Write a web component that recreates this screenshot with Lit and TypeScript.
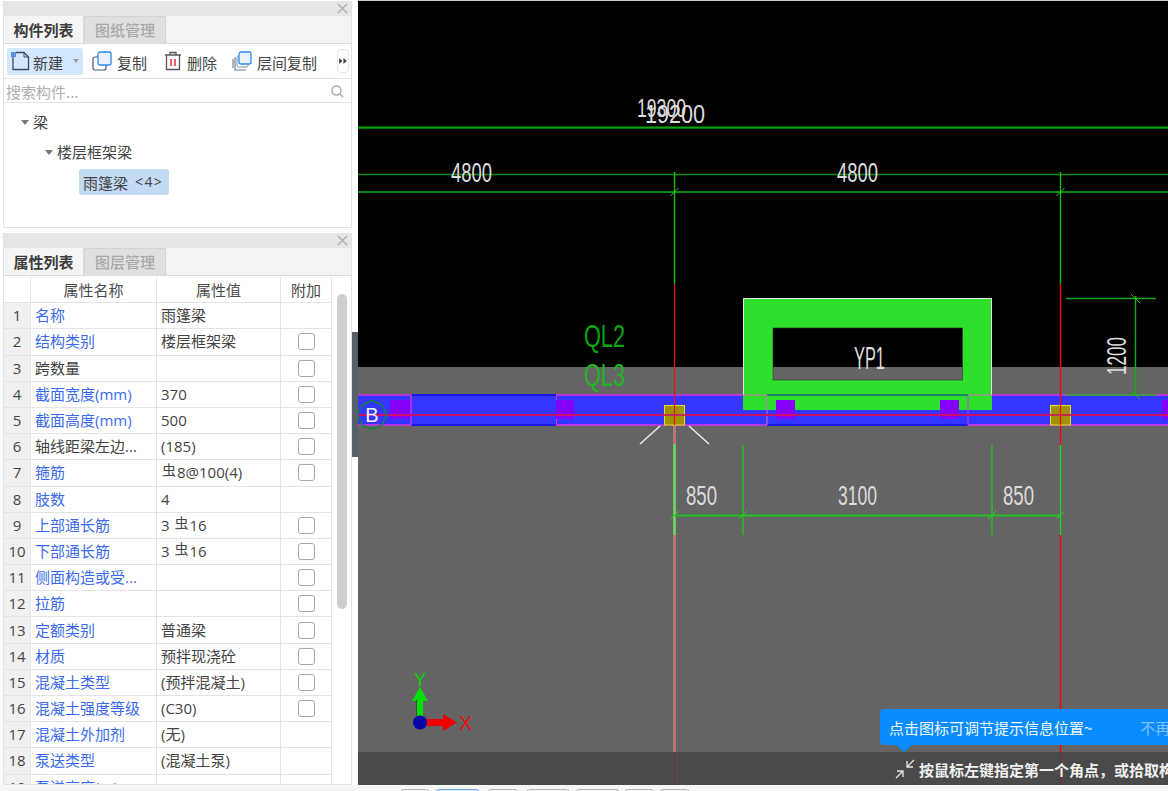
import { LitElement, html, css, svg } from "lit";
import { customElement } from "lit/decorators.js";

interface Row { name: string; val: unknown; blue: boolean; check: boolean; }
const bar = html`<span class="steel">虫</span>`;
const rows: Row[] = [
  { name: "名称", val: "雨篷梁", blue: true, check: false },
  { name: "结构类别", val: "楼层框架梁", blue: true, check: true },
  { name: "跨数量", val: "", blue: false, check: true },
  { name: "截面宽度(mm)", val: "370", blue: true, check: true },
  { name: "截面高度(mm)", val: "500", blue: true, check: true },
  { name: "轴线距梁左边...", val: "(185)", blue: false, check: true },
  { name: "箍筋", val: html`${bar}8@100(4)`, blue: true, check: true },
  { name: "肢数", val: "4", blue: true, check: false },
  { name: "上部通长筋", val: html`3 ${bar}16`, blue: true, check: true },
  { name: "下部通长筋", val: html`3 ${bar}16`, blue: true, check: true },
  { name: "侧面构造或受...", val: "", blue: true, check: true },
  { name: "拉筋", val: "", blue: true, check: true },
  { name: "定额类别", val: "普通梁", blue: true, check: true },
  { name: "材质", val: "预拌现浇砼", blue: true, check: true },
  { name: "混凝土类型", val: "(预拌混凝土)", blue: true, check: true },
  { name: "混凝土强度等级", val: "(C30)", blue: true, check: true },
  { name: "混凝土外加剂", val: "(无)", blue: true, check: false },
  { name: "泵送类型", val: "(混凝土泵)", blue: true, check: false },
  { name: "泵送高度(m)", val: "", blue: true, check: false },
];

/* CAD annotation: x = left, y = baseline, w = run width, h = digit height */
const cad = (x: number, y: number, w: number, h: number, t: string, fill = "#dcdcdc") =>
  svg`<text class="cad" x=${x} y=${y} font-size=${h / 0.71} textLength=${w} lengthAdjust="spacingAndGlyphs" fill=${fill}>${t}</text>`;

const tick = (x: number, y: number) =>
  svg`<line x1=${x - 4} y1=${y + 4} x2=${x + 4} y2=${y - 4} stroke="#2fd02f"/>`;

@customElement("app-root")
export class AppRoot extends LitElement {
  static styles = css`
    :host { display: block; width: 1168px; height: 791px; overflow: hidden; background: #f6f6f6;
      font-family: "Noto Sans CJK SC", "Noto Sans", sans-serif; color: #444; font-size: 15px; }
    .main { display: flex; height: 785px; background: #c8c8c8; }
    .left { position: relative; width: 358px; flex: none; padding: 1px 0 0 3px; box-sizing: border-box; background: #fff;
      display: flex; flex-direction: column; gap: 5px; }
    .handle { position: absolute; left: 352px; top: 332px; width: 6px; height: 125px; background: #56606a; }
    .panel { width: 349px; box-sizing: border-box; border: 1px solid #e2e2e2; border-top: 0; background: #fff;
      display: flex; flex-direction: column; overflow: hidden; }
    .p1 { height: 227px; flex: none; }
    .p2 { flex: 1; min-height: 0; }
    .title { height: 15px; flex: none; background: #e6e6e6; display: flex; justify-content: flex-end; align-items: center; padding-right: 3px; }
    .title svg { display: block; }
    .tabs { height: 28px; flex: none; display: flex; background: #f3f3f3; border-bottom: 1px solid #dcdcdc; box-sizing: border-box; }
    .tab { width: 80px; box-sizing: border-box; display: flex; align-items: center; justify-content: center; line-height: 1; padding-bottom: 1px; }
    .tab.on { font-weight: 700; color: #3c3c3c; background: #f5f5f5; border-right: 1px solid #ddd; }
    .tab.off { width: 82px; color: #a8a8a8; background: #e0e0e0; border: 1px solid #d4d4d4; border-bottom: 0; font-weight: 500; }
    .tools { height: 35px; flex: none; display: flex; align-items: center; padding: 0 2px 0 3px; border-bottom: 1px solid #e4e4e4; box-sizing: border-box; }
    .tool { display: flex; align-items: center; gap: 5px; line-height: 1; white-space: nowrap; }
    .tool svg { display: block; flex: none; }
    .tool span:not(.caret) { padding-top: 2px; }
    .new { width: 76px; height: 27px; background: #d3e8ff; border-radius: 3px; padding-left: 3px; box-sizing: border-box; margin-right: 9px; gap: 3px; }
    .caret { width: 0; height: 0; border: 3.5px solid transparent; border-top: 4px solid #9a9a9a; border-bottom: 0; margin-left: 7px; }
    .t2 { margin-right: 17px; }
    .t3 { margin-right: 15px; }
    .more { margin-left: auto; width: 12px; height: 24px; border: 1px solid #e4e4e4; border-radius: 4px; box-sizing: border-box;
      display: flex; align-items: center; justify-content: center; }
    .search { height: 24px; flex: none; display: flex; align-items: center; justify-content: space-between; padding: 2px 7px 0 2px; color: #aeaeae; border-bottom: 1px solid #e4e4e4; box-sizing: border-box; line-height: 1; }
    .tree { flex: 1; padding: 5px 0 0 0; }
    .node { display: flex; align-items: center; gap: 4px; height: 26px; line-height: 1; }
    .arrow { width: 0; height: 0; border: 4px solid transparent; border-top: 5px solid #777; border-bottom: 0; margin-top: 2px; }
    .n1 { padding-left: 17px; margin-bottom: 4px; }
    .n2 { padding-left: 41px; }
    .sel { margin: 5px 0 0 75px; width: 90px; height: 26px; background: #c2daf3; border-radius: 3px; display: flex; align-items: center;
      padding-left: 4px; box-sizing: border-box; line-height: 1; gap: 7px; }
    .count { letter-spacing: 1.4px; font-size: 14px; font-family: "Open Sans", sans-serif; }
    .wrap { flex: 1; min-height: 0; position: relative; overflow: hidden; padding-top: 1px; }
    .grid { display: grid; grid-template-columns: 27px 126px 124px 51px; grid-auto-rows: 26.2px; width: 328px; }
    .c { border-right: 1px solid #e4e4e4; border-bottom: 1px solid #e4e4e4; box-sizing: border-box; display: flex; align-items: center;
      white-space: nowrap; overflow: hidden; line-height: 1; padding-left: 4px; }
    .hd { justify-content: center; padding-left: 0; font-size: 15px; color: #4a4a4a; }
    .i { background: #f0f0f0; justify-content: center; padding-left: 0; font-family: "Open Sans", sans-serif; font-size: 15px; }
    .blue { color: #3a6af0; }
    .num { font-family: "Open Sans", "Noto Sans CJK SC", sans-serif; }
    .v { white-space: pre; }
    .ck { justify-content: center; padding-left: 0; }
    .box { width: 17px; height: 17px; box-sizing: border-box; border: 1px solid #a8a8a8; border-radius: 3px; background: #fff; }
    .steel { font-size: 14px; position: relative; top: -3px; margin: 0 1px; font-family: "Noto Sans CJK SC", sans-serif; }
    .thumb { position: absolute; left: 333px; top: 18px; width: 10px; height: 315px; border-radius: 5px; background: #cfcfcf; }
    .canvas { position: relative; flex: 1; overflow: hidden; background: #000; margin-top: 1px; }
    .canvas > svg { position: absolute; left: 0; top: 0; display: block; }
    .cad { font-family: "Liberation Sans", sans-serif; font-weight: 400; }
    .tip { position: absolute; left: 522px; top: 708px; width: 300px; height: 36px; background: #0a8cff; border-radius: 4px; color: #f2f8ff;
      font-size: 15px; display: flex; align-items: center; padding-left: 9px; box-sizing: border-box; white-space: nowrap; line-height: 1; }
    .tip::after { content: ""; position: absolute; left: 16px; top: 36px; border: 8px solid transparent; border-top: 7px solid #0a8cff; border-bottom: 0; }
    .later { margin-left: 48px; color: #7fc0ff; }
    .prompt { position: absolute; left: 537px; top: 758px; display: flex; align-items: center; gap: 4px; color: #f0f0f0; font-weight: 700; font-size: 15px;
      white-space: nowrap; line-height: 1; height: 20px; }
    .prompt svg { display: block; flex: none; }
    .foot { height: 6px; display: flex; background: #f6f6f6; overflow: hidden; }
    .pill { height: 10px; margin-top: 4px; box-sizing: border-box; border: 1px solid #b4b4b4; border-radius: 4px; background: #f6f6f6; flex: none; }
    .pill.cur { border-color: #6aa8ee; background: #d3e8ff; }
  `;

  private x() {
    return html`<svg width="11" height="11" viewBox="0 0 11 11" fill="none" stroke="#a9a9a9" stroke-width="1.2"><path d="M1 1l9 9M10 1l-9 9"/></svg>`;
  }

  private drawing() {
    return svg`
    <svg width="810" height="784" viewBox="358 1 810 784" xmlns="http://www.w3.org/2000/svg" fill="none">
      <rect x="358" y="1" width="810" height="366" fill="#000"/>
      <rect x="358" y="367" width="810" height="385" fill="#646464"/>
      <rect x="358" y="752" width="810" height="33" fill="#4a4a4a"/>

      <!-- top dimension lines -->
      <line x1="358" x2="1168" y1="127.7" y2="127.7" stroke="#0aa50a" stroke-width="2.2"/>
      <line x1="358" x2="1168" y1="174.5" y2="174.5" stroke="#0a8c0a" stroke-width="1.4"/>
      <line x1="358" x2="1168" y1="192" y2="192" stroke="#0ab80a" stroke-width="1.6"/>
      <line x1="674.5" x2="674.5" y1="172" y2="284" stroke="#0ac00a" stroke-width="1.4"/>
      <line x1="1060.5" x2="1060.5" y1="172" y2="284" stroke="#0ac00a" stroke-width="1.4"/>
      ${tick(674.5, 192)} ${tick(1060.5, 192)}
      ${cad(637, 117, 49, 18, "19300")}
      ${cad(645, 123, 60, 18, "19200")}
      ${cad(451, 182, 41, 19, "4800")}
      ${cad(837, 182, 41, 19, "4800")}
      ${cad(584, 347, 41, 22, "QL2", "#0fa50f")}
      ${cad(584, 386, 41, 22, "QL3", "#22b422")}

      <!-- canopy -->
      <path d="M743 410V298H992V410H743ZM773 328V380H962.500V328H773Z" fill="#2ce02c" fill-rule="evenodd"/>
      <path d="M743.500 395V298.500H991.500V395" stroke="#e6e6e6"/>
      <rect x="773" y="328" width="189.500" height="52" stroke="#333" stroke-width="0.6"/>
      ${cad(854, 369, 31, 22, "YP1")}

      <!-- beam -->
      <rect x="358" y="395" width="385" height="30" fill="#3535ff"/>
      <rect x="992" y="395" width="176" height="30" fill="#3535ff"/>
      <rect x="743" y="410" width="249" height="15" fill="#3535ff"/>
      <line x1="411" x2="556" y1="395" y2="395" stroke="#1a1ae0" stroke-width="2"/>
      <line x1="411" x2="556" y1="425" y2="425" stroke="#1a1ae0" stroke-width="2"/>
      <line x1="767" x2="968" y1="395" y2="395" stroke="#16607a" stroke-width="1.5"/>
      <line x1="767" x2="968" y1="425" y2="425" stroke="#1a1ae0" stroke-width="2"/>
      <path d="M358 395H411V425H358" stroke="#d830e8" stroke-width="1.4"/>
      <path d="M556 395H743" stroke="#d830e8" stroke-width="1.4"/>
      <path d="M743 395H767" stroke="#c080a0" stroke-width="1.2"/>
      <path d="M968 395H992" stroke="#c080a0" stroke-width="1.2"/>
      <path d="M556 425H767" stroke="#e030f0" stroke-width="1.4"/>
      <line x1="556.500" x2="556.500" y1="395" y2="425" stroke="#e030f0"/>
      <line x1="767" x2="767" y1="395" y2="425" stroke="#d070c0"/>
      <line x1="968" x2="968" y1="395" y2="425" stroke="#e030f0"/>
      <path d="M968 425H1168" stroke="#e030f0" stroke-width="1.4"/>
      <path d="M992 395H1168" stroke="#d830e8" stroke-width="1.4"/>

      <rect x="390" y="400" width="20" height="19" fill="#8400f8"/>
      <rect x="556" y="400" width="18" height="19" fill="#8400f8"/>
      <rect x="776" y="400" width="19" height="19" fill="#8400f8"/>
      <rect x="940" y="400" width="19" height="19" fill="#8400f8"/>
      <rect x="1162" y="400" width="6" height="19" fill="#8400f8"/>

      <line x1="358" x2="1168" y1="415" y2="415" stroke="#c8106c" stroke-width="2"/>

      <!-- axis B bubble -->
      <path d="M372 400.500L382 405L386.500 415L382 425L372 429.500L362 425L357.500 415L362 405Z" stroke="#0a8a3a" stroke-width="1.4"/>
      <text x="372" y="422" text-anchor="middle" font-size="20" fill="#f0f0ff" class="cad">B</text>

      <!-- grid lines -->
      <line x1="674.500" x2="674.500" y1="284" y2="444" stroke="#f01010" stroke-width="1.2"/>
      <line x1="1060.500" x2="1060.500" y1="284" y2="445" stroke="#f00" stroke-width="1.4"/>
      <line x1="674.500" x2="674.500" y1="425" y2="752" stroke="#8a8a8a" stroke-width="3"/>
      <line x1="674.500" x2="674.500" y1="425" y2="752" stroke="#ff5a5a" stroke-width="1.4"/>
      <line x1="674.500" x2="674.500" y1="752" y2="785" stroke="#6a3434"/>
      <line x1="674.500" x2="674.500" y1="444" y2="535" stroke="#55f055" stroke-width="2"/>
      <line x1="1060.500" x2="1060.500" y1="445" y2="535" stroke="#10e010" stroke-width="1.2"/>
      <line x1="1060.500" x2="1060.500" y1="535" y2="752" stroke="#f00" stroke-width="1.4"/>
      <line x1="1060.500" x2="1060.500" y1="752" y2="785" stroke="#7a2a2a"/>

      <!-- yellow grips -->
      <rect x="664.500" y="405.500" width="20" height="19.500" fill="#a09200" stroke="#e8e020"/>
      <rect x="1050.500" y="405.500" width="20" height="19.500" fill="#a09200" stroke="#e8e020"/>
      <line x1="674.500" x2="674.500" y1="405" y2="425" stroke="#e81010" stroke-width="1.2"/>
      <line x1="1060.500" x2="1060.500" y1="405" y2="425" stroke="#f00" stroke-width="1.2"/>
      <line x1="664" x2="685" y1="415" y2="415" stroke="#c8106c" stroke-width="1.6"/>
      <line x1="1050" x2="1071" y1="415" y2="415" stroke="#c8106c" stroke-width="1.6"/>
      <path d="M660 426L640 444M689 426L709 444" stroke="#e8e8e8" stroke-width="1.6"/>

      <!-- lower dimensions -->
      <line x1="674" x2="1060" y1="515.500" y2="515.500" stroke="#22c022" stroke-width="1.8"/>
      <line x1="743" x2="743" y1="445" y2="535" stroke="#1cc81c" stroke-width="1.4"/>
      <line x1="992" x2="992" y1="445" y2="535" stroke="#1cc81c" stroke-width="1.4"/>
      ${tick(674.5, 515)} ${tick(743, 515)} ${tick(992, 515)} ${tick(1060.5, 515)}
      ${cad(686, 505, 31, 20, "850")}
      ${cad(838, 505, 39, 20, "3100")}
      ${cad(1003, 505, 31, 20, "850")}

      <!-- 1200 dimension -->
      <line x1="1066" x2="1156" y1="298.500" y2="298.500" stroke="#10a810" stroke-width="1.4"/>
      <line x1="1066" x2="1156" y1="395" y2="395" stroke="#18b818" stroke-width="1.4"/>
      <line x1="1135.500" x2="1135.500" y1="296" y2="396" stroke="#10b010" stroke-width="1.4"/>
      <path d="M1131 294L1140 303M1131 391L1140 399" stroke="#10c010"/>
      <g transform="translate(1126 375) rotate(-90)">${cad(0, 0, 38, 20, "1200")}</g>

      <!-- UCS -->
      <path d="M417 720V701H412L420 687L428 701H423V720Z" fill="#00e000"/>
      <line x1="416.500" x2="416.500" y1="700" y2="716" stroke="#444"/>
      <path d="M424 719H443V714L457 722.500L443 731V726H424Z" fill="#f00000"/>
      <circle cx="420" cy="722.500" r="7" fill="#0606a8"/>
      <text class="cad" x="414" y="686" font-size="18" fill="#00d800">Y</text>
      <text class="cad" x="459" y="730" font-size="20" fill="#e81010">X</text>
    </svg>`;
  }

  render() {
    const pills: [number, number, boolean][] = [
      [30, 400, false], [45, 5, true], [32, 7, false], [44, 7, false], [45, 5, false], [31, 4, false], [31, 4, false],
    ];
    return html`
      <div class="main">
        <div class="left">
          <section class="panel p1">
            <div class="title">${this.x()}</div>
            <div class="tabs"><div class="tab on">构件列表</div><div class="tab off">图纸管理</div></div>
            <div class="tools">
              <div class="tool new">
                <svg width="20" height="20" viewBox="0 0 20 20" fill="none"><path d="M3 5V18.500H18.500V6L14 1.500H6" stroke="#3b4a5c" stroke-width="1.3"/><path d="M14 1.500V6H18.500" stroke="#3b4a5c"/><rect x="1" y="1" width="5" height="5" fill="#5b8fe0"/></svg>
                <span>新建</span><span class="caret"></span>
              </div>
              <div class="tool t2">
                <svg width="20" height="20" viewBox="0 0 20 20" fill="none"><rect x="1" y="6" width="13" height="13" rx="2" stroke="#4a5a6a" stroke-width="1.2"/><rect x="6" y="1" width="13" height="13" rx="2" fill="#eaf3ff" stroke="#2d8cf0" stroke-width="1.3"/></svg>
                <span>复制</span>
              </div>
              <div class="tool t3">
                <svg width="18" height="20" viewBox="0 0 18 20" fill="none"><path d="M1 4H17M6 4V1.500H12V4M2.500 4V18.500H15.500V4" stroke="#555" stroke-width="1.3"/><path d="M7 8V15M11 8V15" stroke="#e02020" stroke-width="1.4"/></svg>
                <span>删除</span>
              </div>
              <div class="tool">
                <svg width="20" height="20" viewBox="0 0 20 20" fill="none"><path d="M3 6V19H14M1 8V17" stroke="#6a7a8a" stroke-width="1.1"/><rect x="5" y="5" width="11" height="11" rx="1.500" stroke="#7a8a9a"/><rect x="7" y="1" width="12" height="12" rx="2" fill="#eaf3ff" stroke="#2d8cf0" stroke-width="1.3"/></svg>
                <span>层间复制</span>
              </div>
              <div class="more"><svg width="8" height="6" viewBox="0 0 9 7"><path d="M0 0L4 3.500L0 7ZM5 0L9 3.500L5 7Z" fill="#444"/></svg></div>
            </div>
            <div class="search">
              <span>搜索构件...</span>
              <svg width="13" height="13" viewBox="0 0 13 13" fill="none" stroke="#a8a8a8" stroke-width="1.400"><circle cx="5.500" cy="5.500" r="4.500"/><path d="M9 9l3 3"/></svg>
            </div>
            <div class="tree">
              <div class="node n1"><span class="arrow"></span><span>梁</span></div>
              <div class="node n2"><span class="arrow"></span><span>楼层框架梁</span></div>
              <div class="sel"><span>雨篷梁</span><span class="count">&lt;4&gt;</span></div>
            </div>
          </section>
          <section class="panel p2">
            <div class="title">${this.x()}</div>
            <div class="tabs"><div class="tab on">属性列表</div><div class="tab off">图层管理</div></div>
            <div class="wrap">
              <div class="grid">
                <div class="c hd"></div><div class="c hd">属性名称</div><div class="c hd">属性值</div><div class="c hd">附加</div>
                ${rows.map((r, i) => html`
                  <div class="c i">${i + 1}</div>
                  <div class="c num ${r.blue ? "blue" : ""}">${r.name}</div>
                  <div class="c num"><span class="v">${r.val}</span></div>
                  <div class="c ck">${r.check ? html`<span class="box"></span>` : ""}</div>`)}
              </div>
              <div class="thumb"></div>
            </div>
          </section>
          <div class="handle"></div>
        </div>
        <div class="canvas">
          ${this.drawing()}
          <div class="tip">点击图标可调节提示信息位置~<span class="later">不再提示</span></div>
          <div class="prompt">
            <svg width="20" height="20" viewBox="0 0 20 20" fill="none" stroke="#e8e8e8" stroke-width="1.300"><path d="M1 19L8 12M2 12H8V18M19 1L12 8M12 2V8H18"/></svg>
            <span>按鼠标左键指定第一个角点，或拾取构件图元</span>
          </div>
        </div>
      </div>
      <div class="foot">
        ${pills.map(([w, ml, cur]) => html`<span class="pill ${cur ? "cur" : ""}" style="width:${w}px;margin-left:${ml}px"></span>`)}
      </div>
    `;
  }
}
